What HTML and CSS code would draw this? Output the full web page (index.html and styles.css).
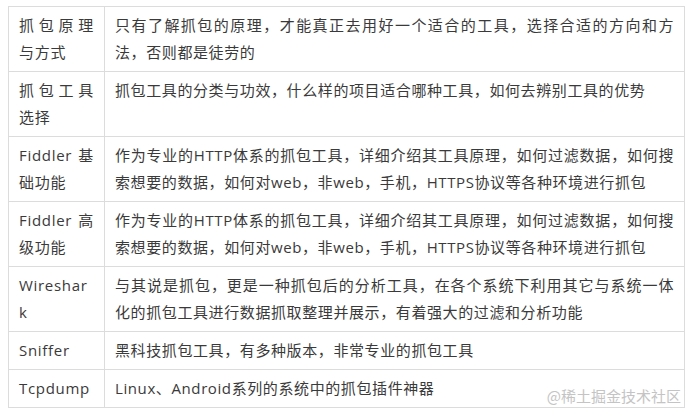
FILE: index.html
```
<!DOCTYPE html>
<html lang="zh-CN">
<head>
    <meta charset="UTF-8">
    <meta name="viewport" content="width=device-width, initial-scale=1.0">
    <title>抓包工具</title>
    <link rel="stylesheet" href="styles.css">
</head>
<body>
    <div class="wrap">
        <table class="tools">
            <tr>
                <td class="name">抓包原理与方式</td>
                <td>只有了解抓包的原理，才能真正去用好一个适合的工具，选择合适的方向和方法，否则都是徒劳的</td>
            </tr>
            <tr>
                <td class="name">抓包工具选择</td>
                <td>抓包工具的分类与功效，什么样的项目适合哪种工具，如何去辨别工具的优势</td>
            </tr>
            <tr>
                <td class="name">Fiddler 基础功能</td>
                <td>作为专业的HTTP体系的抓包工具，详细介绍其工具原理，如何过滤数据，如何搜索想要的数据，如何对web，非web，手机，HTTPS协议等各种环境进行抓包</td>
            </tr>
            <tr>
                <td class="name">Fiddler 高级功能</td>
                <td>作为专业的HTTP体系的抓包工具，详细介绍其工具原理，如何过滤数据，如何搜索想要的数据，如何对web，非web，手机，HTTPS协议等各种环境进行抓包</td>
            </tr>
            <tr>
                <td class="name">Wireshark</td>
                <td>与其说是抓包，更是一种抓包后的分析工具，在各个系统下利用其它与系统一体化的抓包工具进行数据抓取整理并展示，有着强大的过滤和分析功能</td>
            </tr>
            <tr>
                <td class="name">Sniffer</td>
                <td>黑科技抓包工具，有多种版本，非常专业的抓包工具</td>
            </tr>
            <tr>
                <td class="name">Tcpdump</td>
                <td>Linux、Android系列的系统中的抓包插件神器</td>
            </tr>
        </table>
        <span class="mark">@稀土掘金技术社区</span>
    </div>
</body>
</html>
```

FILE: styles.css
```
body {
    margin: 6px 8px;
    background-color: #fff;
    font-family: "Open Sans", "Noto Sans CJK SC", sans-serif;
    color: #3a3a3a;
}
.wrap {
    position: relative;
    width: 677px;
}
.tools {
    width: 100%;
    border-collapse: collapse;
    font-size: 15px;
    line-height: 27px;
    letter-spacing: 0.6px;
}
.tools td {
    border: 1px solid #dcdcdc;
    padding: 5px 10px;
    vertical-align: top;
    text-align: justify;
    word-break: break-all;
}
.tools td.name {
    width: 75px;
    letter-spacing: 0.7px;
}
.mark {
    position: absolute;
    right: 4px;
    bottom: 3px;
    font-family: "Noto Sans CJK SC", sans-serif;
    font-size: 15px;
    line-height: 18px;
    letter-spacing: 0;
    color: #c4c4c4;
    text-shadow: 0 0 2px #fff;
}
```
